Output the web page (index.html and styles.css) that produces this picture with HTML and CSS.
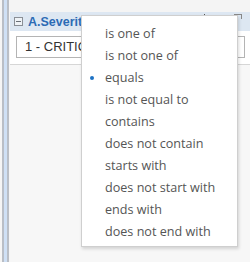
FILE: index.html
```html
<!DOCTYPE html>
<html lang="en">
<head>
    <meta charset="UTF-8">
    <title>Filter</title>
    <link rel="stylesheet" href="styles.css">
</head>
<body>
    <div class="page">
        <div class="rail"></div>
        <div class="panel">
            <div class="top-gap"></div>
            <div class="header">
                <span class="collapse"><span class="minus"></span></span>
                <span class="title">A.Severity</span>
                <span class="tick"></span>
                <span class="menu-icon"></span>
            </div>
            <div class="filter-row">
                <div class="value-box">1 - CRITICAL</div>
            </div>
            <div class="rest"></div>
        </div>
    </div>

    <!-- operator menu -->
    <ul class="op-menu">
        <li>is one of</li>
        <li>is not one of</li>
        <li class="selected">equals</li>
        <li>is not equal to</li>
        <li>contains</li>
        <li>does not contain</li>
        <li>starts with</li>
        <li>does not start with</li>
        <li>ends with</li>
        <li>does not end with</li>
    </ul>
</body>
</html>
```

FILE: styles.css
```css
/* General Styles */
body {
    margin: 0;
    font-family: "Open Sans", "Noto Sans", sans-serif;
    background-color: #f5f5f5;
}

.page {
    display: flex;
    height: 262px;
}

.rail {
    width: 3px;
    margin-left: 2px;
    border-left: 2px solid #b9bec6;
    border-right: 2px solid #b9bec6;
    background-color: #cfe0f5;
}

.panel {
    flex: 1;
    display: flex;
    flex-direction: column;
    margin-left: 1px;
}

.top-gap {
    height: 12px;
    background-color: #f4f4f4;
}

.header {
    height: 19px;
    display: flex;
    align-items: center;
    background-color: #dde7f2;
    position: relative;
}

.collapse {
    width: 7px;
    height: 7px;
    margin-left: 4px;
    border: 1px solid #8a8f96;
    background-color: #eef2f6;
    display: flex;
    align-items: center;
    justify-content: center;
}

.minus {
    width: 5px;
    height: 1px;
    background-color: #6a6f76;
}

.title {
    margin-left: 5px;
    font-family: "Liberation Sans", Arial, sans-serif;
    font-weight: bold;
    font-size: 12.5px;
    color: #2c6bb5;
    white-space: nowrap;
}

.tick {
    position: absolute;
    left: 194px;
    top: 2px;
    width: 1px;
    height: 3px;
    background-color: #555;
}

.menu-icon {
    position: absolute;
    left: 224px;
    top: 2px;
    width: 7px;
    height: 4px;
    border-top: 1px solid #888;
    border-right: 1px solid #888;
}

.filter-row {
    background-color: #fff;
    padding: 5px 5px 6px 6px;
    border-bottom: 1px solid #d6d6d6;
}

.value-box {
    height: 20px;
    border: 1px solid #b4b4b4;
    background-color: #fff;
    padding-left: 8px;
    font-family: "Liberation Sans", Arial, sans-serif;
    font-size: 13px;
    line-height: 20px;
    color: #333;
    white-space: nowrap;
    overflow: hidden;
}

.rest {
    flex: 1;
    background-color: #f7f7f7;
}

.op-menu {
    position: absolute;
    left: 81px;
    top: 15px;
    width: 155px;
    margin: 0;
    padding: 7px 0 3px 0;
    list-style: none;
    background-color: #fff;
    border: 1px solid #cfcfcf;
    box-shadow: 1px 2px 3px rgba(0, 0, 0, 0.15);
}

.op-menu li {
    height: 22px;
    line-height: 22px;
    padding-left: 23px;
    font-size: 12.6px;
    color: #555;
    position: relative;
    white-space: nowrap;
}

.op-menu li.selected::before {
    content: "";
    position: absolute;
    left: 8px;
    top: 9px;
    width: 4px;
    height: 4px;
    border-radius: 50%;
    background-color: #1d72c4;
}
```
